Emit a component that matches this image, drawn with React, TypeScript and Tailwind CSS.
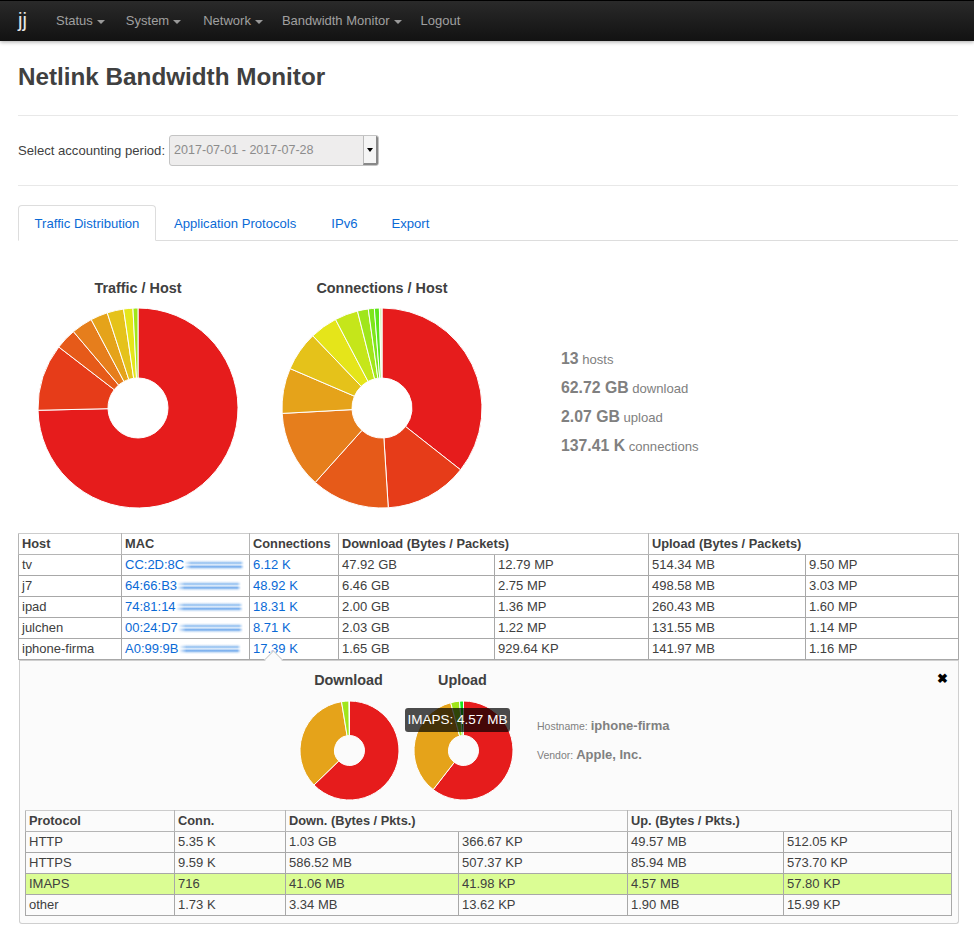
import React from "react";

const C = ["#e61c1c","#e63c19","#e65a19","#e67e1c","#e5a31a","#e5c21a","#e5e51a","#c5e61a","#a0e61a","#7ee61a","#5ce61a","#d8f5c0"];
const C1 = ["#e61c1c","#e63c19","#e65a19","#e67e1c","#e5a31a","#e5c21a","#e5e51a","#a0e61a","#d8f5c0"];

function Pie({ r, inner, stops, colors, sw = 1 }: { r: number; inner: number; stops: number[]; colors: string[]; sw?: number }) {
  const size = 2 * r + 2;
  const c = r + 1;
  const pt = (a: number, rad: number) => {
    const t = (a * Math.PI) / 180;
    return `${(c + rad * Math.sin(t)).toFixed(2)} ${(c - rad * Math.cos(t)).toFixed(2)}`;
  };
  let prev = 0;
  return (
    <svg width={size} height={size} viewBox={`0 0 ${size} ${size}`} className="block">
      {stops.map((s, i) => {
        const d = `M ${pt(prev, inner)} L ${pt(prev, r)} A ${r} ${r} 0 ${s - prev > 180 ? 1 : 0} 1 ${pt(s, r)} L ${pt(s, inner)} A ${inner} ${inner} 0 ${s - prev > 180 ? 1 : 0} 0 ${pt(prev, inner)} Z`;
        prev = s;
        return <path key={i} d={d} fill={colors[i]} stroke="#fff" strokeWidth={sw} />;
      })}
    </svg>
  );
}

const Caret = () => <span className="ml-1 inline-block w-0 h-0 align-middle border-x-[4px] border-x-transparent border-t-[4px] border-t-[#999]" />;

const streak = "inline-block h-[10px] align-[-1px] bg-[linear-gradient(90deg,#ffffff_0%,rgba(255,255,255,0)_12%,rgba(255,255,255,0)_94%,#ffffff_100%),linear-gradient(180deg,#ffffff_0%,#d6e6f8_15%,#8dbdf0_30%,#e4effb_48%,#6ea8ec_68%,#cfe2f7_85%,#ffffff_100%)]";

const hosts = [
  ["tv","CC:2D:8C",60,"6.12 K","47.92 GB","12.79 MP","514.34 MB","9.50 MP"],
  ["j7","64:66:B3",64,"48.92 K","6.46 GB","2.75 MP","498.58 MB","3.03 MP"],
  ["ipad","74:81:14",67,"18.31 K","2.00 GB","1.36 MP","260.43 MB","1.60 MP"],
  ["julchen","00:24:D7",65,"8.71 K","2.03 GB","1.22 MP","131.55 MB","1.14 MP"],
  ["iphone-firma","A0:99:9B",62,"17.39 K","1.65 GB","929.64 KP","141.97 MB","1.16 MP"],
] as const;

const protos = [
  ["HTTP","5.35 K","1.03 GB","366.67 KP","49.57 MB","512.05 KP"],
  ["HTTPS","9.59 K","586.52 MB","507.37 KP","85.94 MB","573.70 KP"],
  ["IMAPS","716","41.06 MB","41.98 KP","4.57 MB","57.80 KP"],
  ["other","1.73 K","3.34 MB","13.62 KP","1.90 MB","15.99 KP"],
];

const th = "h-[21px] px-[3px] py-0 text-left text-[12.8px] font-bold border border-[#b5b5b5] border-t-[#ccc] leading-[20px] whitespace-nowrap";
const td = "h-[21px] px-[3px] py-0 border border-[#a8a8a8] leading-[20px] whitespace-nowrap";

export default function App() {
  return (
    <div className="w-[974px] h-[940px] overflow-hidden bg-white text-[13px] text-[#404040] font-['Liberation_Sans',Arial,sans-serif]">
      <nav className="h-[41px] flex items-center bg-gradient-to-b from-[#2a2a2a] to-[#121212] border-t border-black shadow-[0_1px_4px_rgba(0,0,0,0.35)]">
        <span className="ml-[18px] w-[38px] text-[20px] leading-none text-[#e8e8e8] -mt-[2px]">jj</span>
        <div className="flex gap-5 text-[#a0a0a0]">
          <span>Status<Caret /></span>
          <span className="ml-[1px]">System<Caret /></span>
          <span className="ml-[2px]">Network<Caret /></span>
          <span className="-ml-[1px]">Bandwidth Monitor<Caret /></span>
          <span className="-ml-[1px]">Logout</span>
        </div>
      </nav>

      <main className="pl-[18px] pr-[16px]">
        <h1 className="mt-[21px] h-[30px] text-[24.25px] leading-[30px] font-bold text-[#404040]">Netlink Bandwidth Monitor</h1>
        <hr className="mt-[23px] border-[#e8e8e8]" />
        <div className="mt-[19px] h-[31px] flex items-center gap-[4px]">
          <span className="text-[13.1px]">Select accounting period:</span>
          <div className="w-[210px] h-[31px] flex items-center justify-between rounded-[3px] border border-[#c4c4c4] bg-[#eeeded] text-[#8c8c8c] text-[12.55px] pl-1 overflow-hidden">
            <span>2017-07-01 - 2017-07-28</span>
            <span className="w-[15px] h-full flex items-center justify-center bg-[#f5f5f5] border-l border-[#bbb] border-r-2 border-r-[#888] border-b-2 border-b-[#888]">
              <span className="w-0 h-0 border-x-[3px] border-x-transparent border-t-[4px] border-t-black" />
            </span>
          </div>
        </div>
        <hr className="mt-[19px] border-[#e8e8e8]" />

        <div className="mt-[19px] h-[36px] flex border-b border-[#ddd] text-[#0a6ad6] text-[13.1px]">
          <span className="w-[138px] h-[36px] pt-[1px] flex items-center justify-center bg-white border border-[#ddd] border-b-white rounded-t-[4px]">Traffic Distribution</span>
          <span className="ml-[18px] pt-[2px] flex items-center">Application Protocols</span>
          <span className="ml-[35px] pt-[2px] flex items-center">IPv6</span>
          <span className="ml-[34px] pt-[2px] flex items-center">Export</span>
        </div>

        <div className="mt-[38px] flex h-[233px]">
          <div className="w-[202px] ml-[19px] flex flex-col items-center">
            <div className="h-[18px] leading-[18px] text-[14.4px] font-bold">Traffic / Host</div>
            <div className="mt-[10px]">
              <Pie r={100} inner={30} colors={C1} stops={[268.7,307.6,319.8,332.1,342.1,351.7,357.1,360]} />
            </div>
          </div>
          <div className="w-[202px] ml-[42px] flex flex-col items-center">
            <div className="h-[18px] leading-[18px] text-[14.4px] font-bold">Connections / Host</div>
            <div className="mt-[10px]">
              <Pie r={100} inner={30} colors={C} stops={[128.2,176.4,221.9,266.9,293.2,316.2,332.3,345.8,352.1,355.6,358.5,360]} />
            </div>
          </div>
          <div className="ml-[78px] mt-[68px] text-[#808080] text-[13.1px] flex flex-col gap-[5px]">
            <div className="h-[24px] leading-[24px]"><b className="text-[15.8px]">13</b> hosts</div>
            <div className="h-[24px] leading-[24px]"><b className="text-[15.8px]">62.72 GB</b> download</div>
            <div className="h-[24px] leading-[24px]"><b className="text-[15.8px]">2.07 GB</b> upload</div>
            <div className="h-[24px] leading-[24px]"><b className="text-[15.8px]">137.41 K</b> connections</div>
          </div>
        </div>

        <table className="mt-[21px] w-[940px] table-fixed border-collapse">
          <colgroup>
            <col className="w-[103px]" /><col className="w-[128px]" /><col className="w-[89px]" /><col className="w-[156px]" /><col className="w-[154px]" /><col className="w-[157px]" /><col className="w-[153px]" />
          </colgroup>
          <thead>
            <tr>
              <th className={th}>Host</th><th className={th}>MAC</th><th className={th}>Connections</th>
              <th className={th} colSpan={2}>Download (Bytes / Packets)</th>
              <th className={th} colSpan={2}>Upload (Bytes / Packets)</th>
            </tr>
          </thead>
          <tbody>
            {hosts.map((h) => (
              <tr key={h[0]}>
                <td className={td}>{h[0]}</td>
                <td className={`${td} text-[#0a6ad6]`}>{h[1]}<span className={streak} style={{ width: h[2] }} /></td>
                <td className={`${td} text-[#0a6ad6]`}>{h[3]}</td>
                <td className={td}>{h[4]}</td><td className={td}>{h[5]}</td><td className={td}>{h[6]}</td><td className={td}>{h[7]}</td>
              </tr>
            ))}
          </tbody>
        </table>

        <div className="relative ml-[1px] w-[940px] h-[264px] bg-[#fbfbfb] border border-t-0 border-[#cfcfcf] rounded-b-[3px] shadow-[inset_0_1px_0_#cfcfcf]">
          <span className="absolute left-[247px] -top-[7px] w-[13px] h-[13px] rotate-45 bg-[#fbfbfb] border-l border-t border-[#cfcfcf]" />
          <span className="absolute right-[10px] top-[9px] text-[13px] leading-[20px] font-bold text-black">✖</span>

          <div className="flex pt-[11px] h-[150px]">
            <div className="ml-[279px] w-[101px] flex flex-col items-center">
              <div className="h-[18px] mr-[2px] leading-[18px] text-[14.4px] font-bold">Download</div>
              <div className="mt-[11px]"><Pie r={49.5} inner={15} colors={["#e61c1c","#e5a31a","#a0e61a","#fff"]} stops={[225.8,350.7,359.5,360]} /></div>
            </div>
            <div className="relative ml-[13px] w-[101px] flex flex-col items-center">
              <div className="h-[18px] mr-[2px] leading-[18px] text-[14.4px] font-bold">Upload</div>
              <div className="mt-[11px]"><Pie r={49.5} inner={15} colors={["#e61c1c","#e5a31a","#a0e61a","#1ae61a"]} stops={[217.8,345,355.4,360]} /></div>
              <span className="absolute left-[-8px] top-[37px] h-[24px] w-[105px] rounded-[3px] bg-black/70 text-white text-[13.5px] leading-[24px] text-center whitespace-nowrap">IMAPS: 4.57 MB</span>
            </div>
            <div className="ml-[23px] mt-[45px] text-[#808080] text-[10.5px]">
              <div className="h-[20px] leading-[20px]">Hostname: <b className="text-[13px]">iphone-firma</b></div>
              <div className="mt-[9px] h-[20px] leading-[20px]">Vendor: <b className="text-[13px]">Apple, Inc.</b></div>
            </div>
          </div>

          <table className="ml-[5px] w-[926px] table-fixed border-collapse">
            <colgroup>
              <col className="w-[149px]" /><col className="w-[111px]" /><col className="w-[173px]" /><col className="w-[169px]" /><col className="w-[156px]" /><col className="w-[168px]" />
            </colgroup>
            <thead>
              <tr>
                <th className={th}>Protocol</th><th className={th}>Conn.</th>
                <th className={th} colSpan={2}>Down. (Bytes / Pkts.)</th>
                <th className={th} colSpan={2}>Up. (Bytes / Pkts.)</th>
              </tr>
            </thead>
            <tbody>
              {protos.map((p) => (
                <tr key={p[0]} className={p[0] === "IMAPS" ? "bg-[#dbfd94]" : ""}>
                  {p.map((v, i) => <td key={i} className={td}>{v}</td>)}
                </tr>
              ))}
            </tbody>
          </table>
        </div>
      </main>
    </div>
  );
}
